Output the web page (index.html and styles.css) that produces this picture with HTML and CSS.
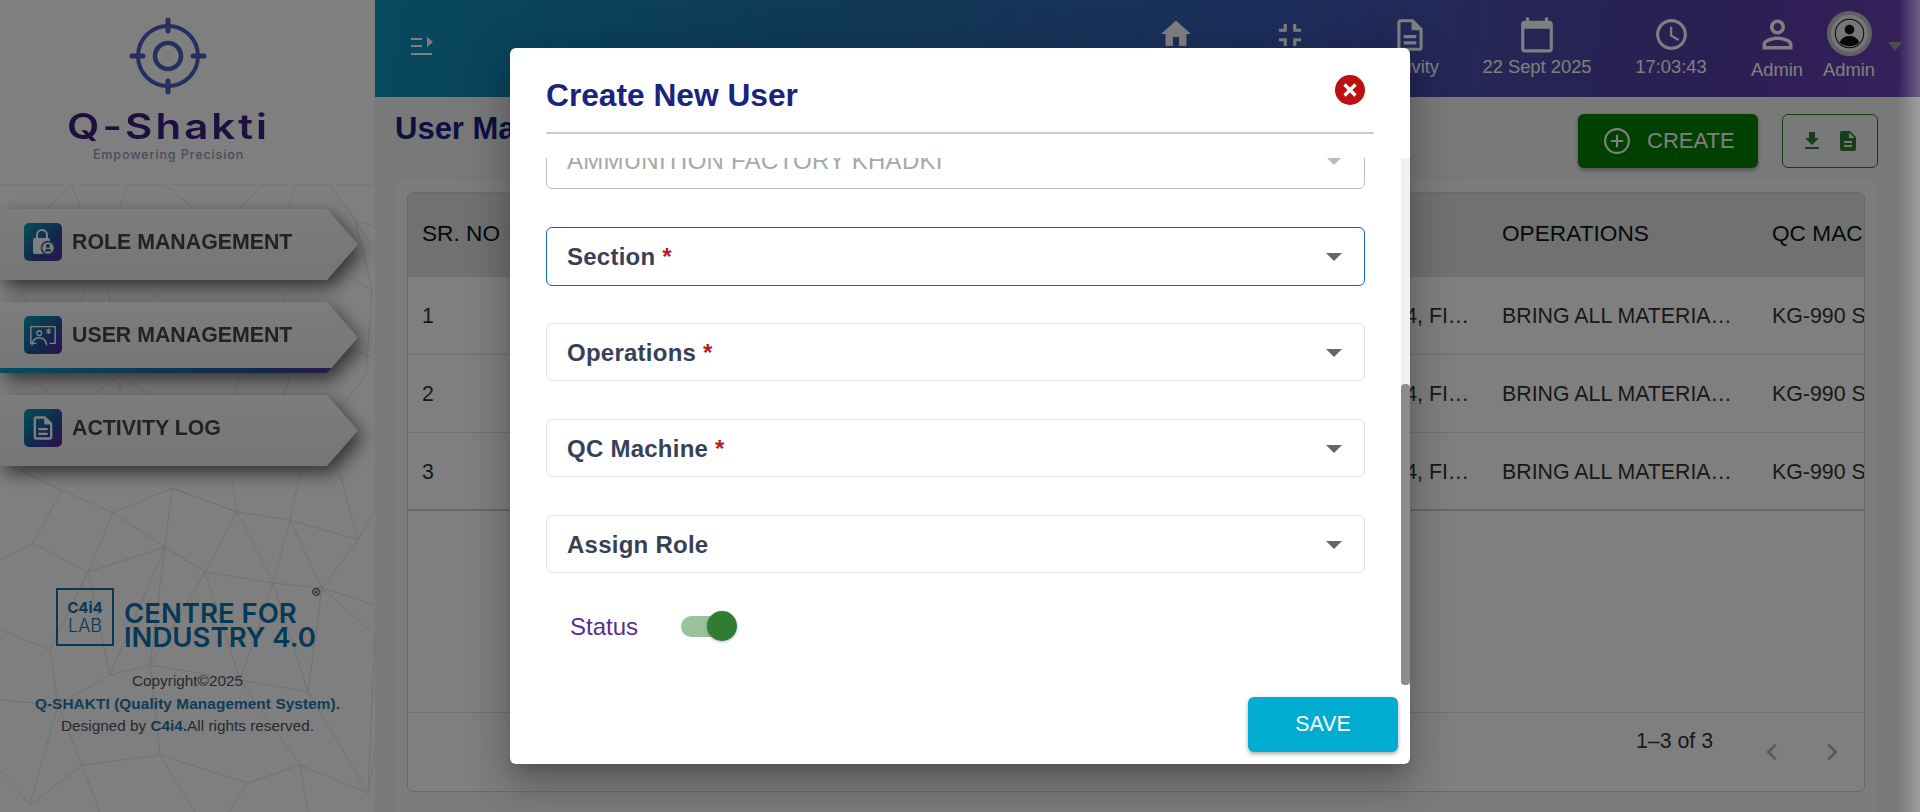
FILE: index.html
```html
<!DOCTYPE html>
<html lang="en">
  <head>
    <meta charset="UTF-8" />
    <title>Q-Shakti User Management</title>
    <link rel="stylesheet" href="styles.css">
  </head>
  <body>
    <div class="app">
      <aside class="sidebar">
        <div class="brand">
          <svg class="brandMark" viewBox="0 0 80 78" width="80" height="78" fill="none" stroke="#4c5fc0" stroke-linecap="round">
            <circle cx="39" cy="38" r="30" stroke-width="4"/>
            <circle cx="39" cy="38" r="13" stroke-width="4.5"/>
            <path d="M39 2v11M39 63v11M3 38h11M64 38h11" stroke-width="5"/>
          </svg>
          <div class="brandName">Q-Shakti</div>
          <div class="brandTag">Empowering Precision</div>
        </div>
        <div class="sideBody">
          <svg class="mesh" viewBox="0 0 375 627" fill="none" stroke-width="1">
            <path d="M72 0L20 50M72 0L82 27M127 0L118 27M165 0L215 40M262 0L225 40M295 0L289 22M330 0L372 60M355 35L375 42M355 35L372 105"/>
            <path d="M20 105L40 140M85 105L75 140M108 105L112 130M150 105L182 130M290 105L260 150M345 90L372 105L366 190M30 190L60 220M120 190L80 220M120 190L120 220M120 190L165 220M240 190L232 220M290 190L280 220M366 190L335 230M355 165L375 175"/>
            <path d="M62 305L113 328L172 303L237 327L290 335L358 355L375 325M62 305L33 358L88 387L165 362L205 387L273 398L322 403L375 420M113 328L88 387M113 328L165 362L172 303M172 303L237 327L205 387L165 362M237 327L273 398M290 335L273 398M290 335L322 403L358 355M33 358L0 375M62 305L20 285M237 327L232 295M290 335L300 290M358 355L340 290"/>
            <path d="M88 387L50 465L0 445M88 387L110 490L165 362M205 387L150 480L165 362M205 387L240 495L273 398M322 403L308 507L273 398M322 403L375 450L368 608M50 465L58 520L0 515M110 490L58 520M110 490L150 480L160 570M240 495L150 480M240 495L308 507L368 608L300 580L240 495M58 520L30 620L0 585M58 520L82 580L160 570L248 598L300 580L310 640M82 580L30 620M82 580L100 627M160 570L195 627M248 598L228 627M368 608L375 570"/>
          </svg>
          <nav class="sideNav">
            <div class="sideItem">
              <span class="sideIcon">
                <svg viewBox="0 0 24 28" width="24" height="28">
                  <path d="M6 11V7a5 5 0 0 1 10 0v4" fill="none" stroke="#fff" stroke-width="2"/>
                  <rect x="2" y="10" width="17" height="16" rx="2" fill="#fff"/>
                  <circle cx="17" cy="20" r="6.500" fill="#fff" stroke="#2e5a94" stroke-width="1.500"/>
                  <circle cx="17" cy="18" r="2" fill="#2e5a94"/>
                  <path d="M13.500 23.500a3.600 3.600 0 0 1 7 0z" fill="#2e5a94"/>
                </svg>
              </span>
              <span class="sideLabel">ROLE MANAGEMENT</span>
            </div>
            <div class="sideItem active">
              <span class="sideIcon">
                <svg viewBox="0 0 30 24" width="28" height="24" fill="none" stroke="#fff" stroke-width="1.500"><path d="M8 21H2V3h26v18h-6"/><circle cx="11" cy="10" r="2.500"/><path d="M3 23c1-6 5-8 8-8s7 2 8 8"/><path d="M21 5v6M18.500 6.500l5 3M23.500 6.500l-5 3"/></svg>
              </span>
              <span class="sideLabel">USER MANAGEMENT</span>
            </div>
            <div class="sideItem">
              <span class="sideIcon">
                <svg viewBox="0 0 24 24" width="28" height="28" fill="#fff"><path d="M8 16h8v2H8zm0-4h8v2H8zm6-10H6c-1.100 0-2 .9-2 2v16c0 1.100.89 2 1.990 2H18c1.100 0 2-.9 2-2V8l-6-6zm4 18H6V4h7v5h5v11z"/></svg>
              </span>
              <span class="sideLabel">ACTIVITY LOG</span>
            </div>
          </nav>
          <div class="sideFoot">
            <div class="labLogo">
              <div class="labBox"><b>C4i4</b><span>LAB</span></div>
              <div class="labName">CENTRE FOR<br>INDUSTRY 4.0<sup>®</sup></div>
            </div>
            <p>Copyright©2025</p>
            <p class="accent">Q-SHAKTI (Quality Management System).</p>
            <p>Designed by <b class="accent">C4i4.</b>All rights reserved.</p>
          </div>
        </div>
      </aside>
      <div class="main">
        <header class="topbar">
          <svg class="menuIcon" viewBox="0 0 22 20" width="22" height="20" fill="#fff"><path d="M0 1h11v2H0zM0 8h11v2H0zM0 16h21v2H0zM16 0l6 5-6 5z"/></svg>
          <div class="topItems">
            <div class="topItem home">
              <div class="topIcon"><svg viewBox="0 0 24 24" width="36" height="36" fill="#fff"><path d="M10 20v-6h4v6h5v-8h3L12 3 2 12h3v8z"/></svg></div>
              <span>Home</span>
            </div>
            <div class="topItem home">
              <div class="topIcon"><svg viewBox="0 0 24 24" width="38" height="38" fill="#fff"><path d="M5 16h3v3h2v-5H5v2zm3-8H5v2h5V5H8v3zm6 11h2v-3h3v-2h-5v5zm2-11V5h-2v5h5V8h-3z"/></svg></div>
              <span>Plant</span>
            </div>
            <div class="topItem act">
              <div class="topIcon"><svg viewBox="0 0 24 24" width="38" height="38" fill="#fff"><path d="M8 16h8v2H8zm0-4h8v2H8zm6-10H6c-1.100 0-2 .9-2 2v16c0 1.100.89 2 1.990 2H18c1.100 0 2-.9 2-2V8l-6-6zm4 18H6V4h7v5h5v11z"/></svg></div>
              <span>Activity</span>
            </div>
            <div class="topItem date">
              <div class="topIcon"><svg viewBox="0 0 24 24" width="38" height="38" fill="#fff"><path d="M20 3h-1V1h-2v2H7V1H5v2H4c-1.100 0-2 .9-2 2v16c0 1.100.9 2 2 2h16c1.100 0 2-.9 2-2V5c0-1.100-.9-2-2-2zm0 18H4V8h16v13z"/></svg></div>
              <span>22 Sept 2025</span>
            </div>
            <div class="topItem time">
              <div class="topIcon"><svg viewBox="0 0 24 24" width="37" height="37" fill="#fff"><path d="M11.990 2C6.470 2 2 6.480 2 12s4.470 10 9.990 10C17.520 22 22 17.520 22 12S17.520 2 11.990 2zM12 20c-4.420 0-8-3.580-8-8s3.580-8 8-8 8 3.580 8 8-3.580 8-8 8zm.5-13H11v6l5.250 3.150.75-1.230-4.500-2.670z"/></svg></div>
              <span>17:03:43</span>
            </div>
            <div class="topItem user">
              <div class="topIcon"><svg viewBox="0 0 24 24" width="45" height="45" fill="#fff"><path d="M12 5.900c1.160 0 2.100.94 2.100 2.100s-.94 2.100-2.100 2.100S9.900 9.160 9.900 8s.94-2.100 2.100-2.100m0 9c2.970 0 6.100 1.460 6.100 2.100v1.100H5.900V17c0-.64 3.130-2.100 6.100-2.100M12 4C9.790 4 8 5.790 8 8s1.790 4 4 4 4-1.790 4-4-1.790-4-4-4zm0 9c-2.670 0-8 1.340-8 4v3h16v-3c0-2.660-5.330-4-8-4z"/></svg></div>
              <span>Admin</span>
            </div>
            <div class="topItem avatarItem">
              <span class="avatar">
                <svg viewBox="0 0 24 24" width="31" height="31"><circle cx="12" cy="12" r="11" fill="none" stroke="#111" stroke-width=".8"/><circle cx="12" cy="9" r="3.700" fill="#111"/><path d="M4.500 19c1-3.500 4.500-5 7.500-5s6.500 1.500 7.500 5a11 11 0 0 1-15 0z" fill="#111"/></svg>
              </span>
              <span>Admin</span>
            </div>
            <span class="caret"></span>
          </div>
        </header>
        <div class="page">
          <div class="pageHead">
            <h1>User Management</h1>
            <div class="pageActions">
              <button class="createBtn">
                <svg viewBox="0 0 24 24" width="30" height="30" fill="none" stroke="#fff" stroke-width="1.700"><circle cx="12" cy="12" r="9.500"/><path d="M12 7v10M7 12h10"/></svg>
                CREATE
              </button>
              <button class="exportBtn">
                <svg viewBox="0 0 24 24" width="24" height="24" fill="#2e7d32"><path d="M19 9h-4V3H9v6H5l7 7zM5 18v2h14v-2z"/></svg>
                <svg viewBox="0 0 24 24" width="24" height="24" fill="#2e7d32"><path d="M14 2H6c-1.100 0-2 .9-2 2v16c0 1.100.9 2 2 2h12c1.100 0 2-.9 2-2V8l-6-6zm2 16H8v-2h8v2zm0-4H8v-2h8v2zm-3-5V3.500L18.500 9H13z"/></svg>
              </button>
            </div>
          </div>
          <div class="card">
            <div class="grid">
              <div class="gridRow gridHead">
                <span>SR. NO</span><span>NAME</span><span>SECTION</span><span>OPERATIONS</span><span>QC MACHINE</span>
              </div>
              <div class="gridRow">
                <span>1</span><span>USER</span><span>SECTION 3, SECTION 4, FINAL ASSEMBLY</span><span>BRING ALL MATERIALS TO LINE</span><span>KG-990 SCALE</span>
              </div>
              <div class="gridRow">
                <span>2</span><span>USER</span><span>SECTION 3, SECTION 4, FINAL ASSEMBLY</span><span>BRING ALL MATERIALS TO LINE</span><span>KG-990 SCALE</span>
              </div>
              <div class="gridRow lastRow">
                <span>3</span><span>USER</span><span>SECTION 3, SECTION 4, FINAL ASSEMBLY</span><span>BRING ALL MATERIALS TO LINE</span><span>KG-990 SCALE</span>
              </div>
              <div class="gridEmpty"></div>
              <div class="gridFoot">
                <span>1–3 of 3</span>
                <svg viewBox="0 0 24 24" width="34" height="34" fill="#b5b5b5"><path d="M15.400 7.400L14 6l-6 6 6 6 1.400-1.400L10.800 12z"/></svg>
                <svg viewBox="0 0 24 24" width="34" height="34" fill="#b5b5b5"><path d="M10 6L8.600 7.400 13.200 12l-4.600 4.600L10 18l6-6z"/></svg>
              </div>
            </div>
          </div>
        </div>
      </div>
    </div>
    <div class="backdrop">
      <div class="modal">
        <div class="modalHead">
          <h2>Create New User</h2>
          <svg class="closeIcon" viewBox="0 0 30 30" width="30" height="30"><circle cx="15" cy="15" r="15" fill="#bb1111"/><path d="M9.500 9.500l11 11M20.500 9.500l-11 11" stroke="#fff" stroke-width="3.200"/></svg>
        </div>
        <div class="modalBody">
          <div class="fieldList">
            <div class="field disabled"><span>AMMUNITION FACTORY KHADKI</span><i class="arrow"></i></div>
            <div class="field focused"><span>Section <em>*</em></span><i class="arrow"></i></div>
            <div class="field"><span>Operations <em>*</em></span><i class="arrow"></i></div>
            <div class="field"><span>QC Machine <em>*</em></span><i class="arrow"></i></div>
            <div class="field"><span>Assign Role</span><i class="arrow"></i></div>
            <div class="statusRow">
              <span>Status</span>
              <div class="switch"><i></i></div>
            </div>
          </div>
          <div class="scrollTrack"><div class="scrollThumb"></div></div>
        </div>
        <div class="modalFoot"><button class="saveBtn">SAVE</button></div>
      </div>
    </div>
    <div class="edgeFade"></div>
  </body>
</html>
```

FILE: styles.css
```css
* {
  margin: 0;
  padding: 0;
  box-sizing: border-box;
}
body {
  width: 1920px;
  height: 812px;
  overflow: hidden;
  position: relative;
  font-family: "Liberation Sans", Arial, sans-serif;
  background-color: #fff;
}
button {
  font-family: inherit;
  border: none;
}
.app {
  display: flex;
  height: 812px;
}

/* sidebar */
.sidebar {
  width: 375px;
  flex-shrink: 0;
  display: flex;
  flex-direction: column;
  background-color: #fff;
}
.brand {
  height: 185px;
  display: flex;
  flex-direction: column;
  align-items: center;
  padding: 18px 38px 0 0;
  border-bottom: 1px solid #f0f0f0;
}
.brandMark {
  display: block;
}
.brandName {
  font-family: Inter, sans-serif;
  font-size: 35px;
  font-weight: 600;
  line-height: 38px;
  letter-spacing: 2.500px;
  color: #3c1e80;
  margin-top: 11px;
  transform: scaleX(1.2);
}
.brandTag {
  font-family: Inter, sans-serif;
  font-size: 12.500px;
  font-weight: 500;
  letter-spacing: 0.900px;
  color: #9498c0;
  margin-top: 2px;
}
.sideBody {
  flex: 1;
  position: relative;
  display: flex;
  flex-direction: column;
  background: #fff;
}
.mesh {
  position: absolute;
  left: 0;
  top: 0;
  width: 375px;
  height: 627px;
  stroke: #e2e2e2;
}
.sideNav {
  position: relative;
  padding-top: 24px;
  display: flex;
  flex-direction: column;
  gap: 22px;
  filter: drop-shadow(5px 7px 9px rgba(0, 0, 0, 0.6));
}
.sideItem {
  width: 358px;
  height: 71px;
  display: flex;
  align-items: center;
  gap: 10px;
  padding: 0 0 6px 24px;
  background: linear-gradient(#fafafa, #ececec);
  clip-path: polygon(0 0, 327px 0, 100% 50%, 327px 100%, 0 100%);
}
.sideItem.active {
  position: relative;
}
.sideItem.active::after {
  content: "";
  position: absolute;
  left: 0;
  right: 0;
  bottom: 0;
  height: 5px;
  background: linear-gradient(90deg, #0a9cb8, #27509f 70%, #5b2d8e);
}
.sideIcon {
  width: 38px;
  height: 38px;
  border-radius: 5px;
  display: flex;
  align-items: center;
  justify-content: center;
  background: linear-gradient(135deg, #04a0af, #254e9b 60%, #5f249f);
}
.sideLabel {
  font-size: 21.330px;
  font-weight: 700;
  color: #444;
  white-space: nowrap;
  margin-top: 2px;
}
.sideFoot {
  position: absolute;
  left: 0;
  right: 0;
  top: 403px;
  text-align: center;
  font-size: 15.330px;
  line-height: 22.500px;
  color: #505060;
}
.accent {
  color: #2476ae;
  font-weight: 700;
}
p.accent {
  letter-spacing: 0.100px;
}
.labLogo {
  display: flex;
  align-items: flex-end;
  gap: 10px;
  margin-left: 56px;
  height: 58px;
  margin-bottom: 24px;
  text-align: left;
  color: #0c72b0;
}
.labBox {
  width: 58px;
  height: 58px;
  border: 2px solid #0c72b0;
  display: flex;
  flex-direction: column;
  align-items: center;
  justify-content: center;
  line-height: 18px;
}
.labBox b {
  font-family: Inter, sans-serif;
  font-size: 15px;
}
.labBox span {
  font-family: Inter, sans-serif;
  font-size: 18px;
  font-weight: 300;
}
.labName {
  font-family: Inter, sans-serif;
  font-size: 27.500px;
  font-weight: 600;
  line-height: 24px;
  position: relative;
  margin-bottom: -3px;
}
.labName sup {
  position: absolute;
  right: -5px;
  top: -16px;
  font-size: 14px;
  line-height: 18px;
  font-weight: 400;
  color: #444;
}

/* top bar */
.main {
  flex: 1;
  min-width: 0;
  display: flex;
  flex-direction: column;
  background-color: #f2f3f5;
}
.topbar {
  height: 97px;
  flex-shrink: 0;
  display: flex;
  align-items: flex-start;
  justify-content: space-between;
  background: linear-gradient(100deg, #0e94c0 0%, #1e78ac 25%, #365eb4 55%, #4c4cac 73%, #543ea4 86%, #6e40b8 100%);
  padding-left: 36px;
  color: #fff;
}
.menuIcon {
  display: block;
  margin-top: 37px;
}
.topItems {
  display: flex;
  padding-right: 18px;
}
.topItem {
  display: flex;
  flex-direction: column;
  align-items: center;
  padding-top: 16px;
  font-size: 18.330px;
  line-height: 21px;
  white-space: nowrap;
}
.topIcon {
  height: 37px;
  display: flex;
  align-items: flex-start;
  justify-content: center;
  margin-bottom: 3px;
}
.home {
  width: 114px;
}
.act {
  width: 126px;
}
.date {
  width: 128px;
}
.time {
  width: 140px;
}
.user {
  width: 72px;
}
.user .topIcon {
  margin-top: -4px;
  height: 44px;
}
.avatarItem {
  width: 72px;
  padding-top: 11px;
  gap: 3px;
}
.avatar {
  width: 45px;
  height: 45px;
  border-radius: 50%;
  background: #eee;
  border: 4px solid #c2c2c2;
  display: flex;
  align-items: center;
  justify-content: center;
}
.caret {
  margin: 42px 0 0 3px;
  width: 0;
  height: 0;
  border-left: 7px solid transparent;
  border-right: 7px solid transparent;
  border-top: 9px solid #9a9a9a;
}

/* page */
.page {
  flex: 1;
  padding: 12px 42px 0 20px;
}
.pageHead {
  display: flex;
  align-items: flex-start;
  justify-content: space-between;
  height: 71px;
}
.pageHead h1 {
  font-size: 31px;
  font-weight: 700;
  color: #1a237e;
  line-height: 40px;
}
.pageActions {
  display: flex;
  gap: 24px;
  margin-top: 5px;
}
.createBtn {
  width: 180px;
  height: 54px;
  display: flex;
  align-items: center;
  gap: 15px;
  padding-left: 24px;
  border-radius: 6px;
  background-color: #008000;
  color: #fff;
  font-size: 22px;
  box-shadow: 0 2px 4px rgba(0, 0, 0, 0.35);
}
.exportBtn {
  width: 96px;
  height: 54px;
  display: flex;
  align-items: center;
  justify-content: center;
  gap: 12px;
  border-radius: 6px;
  background: transparent;
  border: 1px solid #2e7d32;
}
.card {
  height: 640px;
  border-radius: 6px;
  background-color: #f9f9f9;
  padding: 12px 13px 12px 12px;
}
.grid {
  height: 600px;
  border: 1px solid #d4d4d4;
  border-radius: 6px;
  display: flex;
  flex-direction: column;
  overflow: hidden;
  background: #fff;
}
.gridRow {
  flex-shrink: 0;
  display: grid;
  grid-template-columns: 390px 368px 322px 270px 1fr;
  height: 78px;
  padding-top: 2px;
  align-items: center;
  font-size: 21.330px;
  color: #333;
  border-bottom: 1px solid #e0e0e0;
}
.gridRow span {
  padding-left: 14px;
  padding-right: 16px;
  white-space: nowrap;
  overflow: hidden;
  text-overflow: ellipsis;
}
.gridRow span:last-child {
  padding-right: 0;
  text-overflow: clip;
}
.gridHead {
  height: 84px;
  padding-top: 0;
  background-color: #dfe2e4;
  color: #111;
  font-size: 22.670px;
  padding-bottom: 4px;
  border-bottom: none;
}
.lastRow {
  border-bottom: 2px solid #cfcfcf;
}
.gridEmpty {
  flex: 1;
}
.gridFoot {
  height: 79px;
  flex-shrink: 0;
  border-top: 1px solid #e0e0e0;
  display: flex;
  justify-content: flex-end;
  font-size: 21.330px;
  line-height: 24px;
  color: #333;
  padding: 16px 15px 0 0;
  gap: 26px;
}
.gridFoot span {
  margin-right: 16px;
}
.gridFoot svg {
  margin-top: 6px;
}

/* dim + modal */
.backdrop {
  position: absolute;
  inset: 0;
  background: rgba(0, 0, 0, 0.5);
  display: flex;
  align-items: center;
  justify-content: center;
}
.edgeFade {
  position: absolute;
  top: 0;
  right: 0;
  width: 22px;
  height: 812px;
  background: linear-gradient(90deg, rgba(255, 255, 255, 0), rgba(255, 255, 255, 0.28));
}
.modal {
  width: 900px;
  height: 716px;
  background-color: #fff;
  border-radius: 6px;
  display: flex;
  flex-direction: column;
  box-shadow: 0 11px 15px -7px rgba(0, 0, 0, 0.2), 0 24px 38px 3px rgba(0, 0, 0, 0.14), 0 9px 46px 8px rgba(0, 0, 0, 0.12);
}
.modalHead {
  margin: 0 36px;
  height: 86px;
  flex-shrink: 0;
  border-bottom: 2px solid #ccc;
  display: flex;
  align-items: flex-start;
  justify-content: space-between;
  padding: 27px 9px 0 0;
}
.modalHead h2 {
  font-size: 31.700px;
  font-weight: 700;
  color: #1a237e;
  line-height: 40px;
}
.closeIcon {
  display: block;
}
.modalBody {
  flex: 1;
  display: flex;
  margin-top: 24px;
  min-height: 0;
  align-items: flex-start;
  justify-content: space-between;
}
.fieldList {
  width: 819px;
  height: 520px;
  margin-left: 36px;
  overflow: hidden;
  display: flex;
  flex-direction: column;
  gap: 38px;
}
.field {
  height: 58px;
  flex-shrink: 0;
  border: 1px solid #e0e0e0;
  border-radius: 6px;
  display: flex;
  align-items: center;
  justify-content: space-between;
  padding: 1px 22px 0 20px;
  font-size: 24px;
  font-weight: 700;
  letter-spacing: 0.250px;
  color: #374155;
}
.field em {
  font-style: normal;
  color: #b71c1c;
}
.field.focused {
  height: 59px;
  margin-bottom: -1px;
  border-color: #1565c0;
}
.field.disabled {
  font-weight: 400;
  color: #a8a8a8;
  border-color: #bdbdbd;
  margin-top: -27px;
}
.arrow {
  width: 0;
  height: 0;
  border-left: 8px solid transparent;
  border-right: 8px solid transparent;
  border-top: 8px solid #666;
}
.field.disabled .arrow {
  border-top-color: #bbb;
}
.statusRow {
  height: 31px;
  flex-shrink: 0;
  display: flex;
  align-items: center;
  gap: 43px;
  padding-left: 24px;
  font-size: 24px;
  color: #5b2d8e;
}
.switch {
  position: relative;
  width: 46px;
  height: 21px;
  border-radius: 11px;
  background-color: #9ac29c;
}
.switch i {
  position: absolute;
  right: -10px;
  top: -5px;
  width: 30px;
  height: 30px;
  border-radius: 50%;
  background-color: #2e7d32;
  box-shadow: 0 1px 3px rgba(0, 0, 0, 0.3);
}
.scrollTrack {
  width: 9px;
  height: 527px;
  background-color: #f1f1f1;
  padding-top: 226px;
}
.scrollThumb {
  height: 301px;
  border-radius: 4px;
  background-color: #8c8c8c;
}
.modalFoot {
  flex-shrink: 0;
  height: 0;
  position: relative;
}
.saveBtn {
  position: absolute;
  right: 12px;
  bottom: 12px;
  width: 150px;
  height: 55px;
  border-radius: 6px;
  background-color: #00acd1;
  color: #fff;
  font-size: 21.330px;
  box-shadow: 0 2px 4px rgba(0, 0, 0, 0.35);
}
```
